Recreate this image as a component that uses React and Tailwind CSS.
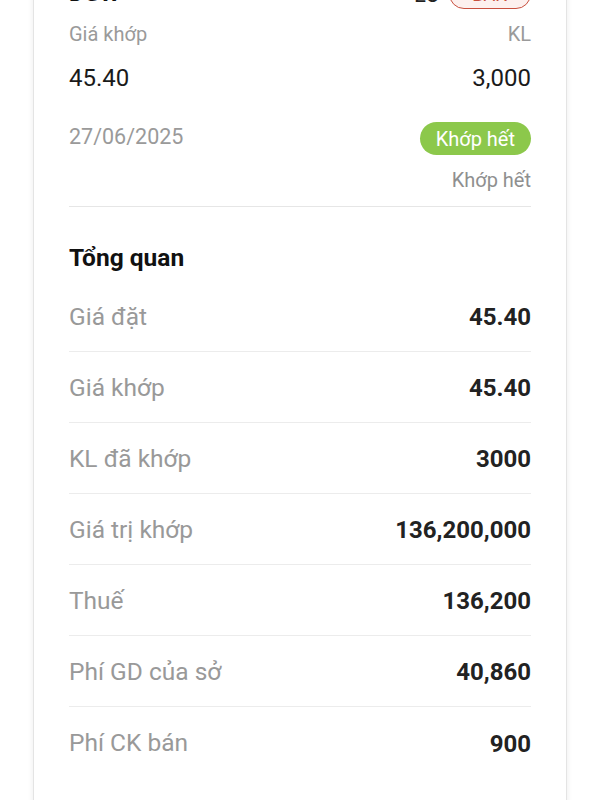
import React from 'react';

const rows = [
  { label: 'Giá đặt', value: '45.40' },
  { label: 'Giá khớp', value: '45.40' },
  { label: 'KL đã khớp', value: '3000' },
  { label: 'Giá trị khớp', value: '136,200,000' },
  { label: 'Thuế', value: '136,200' },
  { label: 'Phí GD của sở', value: '40,860' },
  { label: 'Phí CK bán', value: '900' },
];

const App = () => {
  return (
    <div className="w-[600px] h-[800px] overflow-hidden bg-white font-['Roboto',sans-serif]">
      <div className="mx-[33px] -mt-[22px] min-h-[840px] bg-white border-x border-[#e4e4e4] shadow-[0_0_6px_rgba(0,0,0,0.08)] px-[35px]">
        {/* order head */}
        <div className="h-[32px] mb-[2px] flex items-center justify-between">
          <span className="text-[23px] font-bold text-[#111]">DGW</span>
          <div className="flex items-center gap-[9px]">
            <span className="text-[22px] text-[#222]">LO</span>
            <span className="h-[30px] px-[22px] flex items-center rounded-full border-[1.5px] border-[#c8503f] bg-[#fdf0ee] text-[#c8503f] text-[18px]">BÁN</span>
          </div>
        </div>
        <div className="h-[44px] flex items-center justify-between text-[20px] text-[#9a9a9a]">
          <span>Giá khớp</span>
          <span>KL</span>
        </div>
        <div className="h-[44px] flex items-center justify-between text-[24px] text-[#1a1a1a]">
          <span>45.40</span>
          <span>3,000</span>
        </div>
        <div className="pt-[22px] flex items-center justify-between">
          <span className="text-[21.5px] text-[#9a9a9a] -mt-[2px]">27/06/2025</span>
          <span className="h-[33px] px-[16px] flex items-center rounded-full bg-[#8cc84b] text-white text-[20px]">Khớp hết</span>
        </div>
        <div className="mt-[13px] h-[24px] flex items-center justify-end text-[20px] text-[#8f8f8f]">Khớp hết</div>
        <div className="mt-[14px] border-t border-[#e6e6e6]"></div>

        {/* overview */}
        <div className="mt-[36px] h-[30px] flex items-center text-[24.5px] font-bold text-[#111]">Tổng quan</div>
        <div className="mt-[8px]">
          {rows.map((r, i) => (
            <div
              key={r.label}
              className={`h-[71px] pt-[2px] flex items-center justify-between ${i < rows.length - 1 ? 'border-b border-[#ececec]' : ''}`}
            >
              <span className="text-[24.5px] text-[#999]">{r.label}</span>
              <span className="text-[24px] font-bold text-[#222]">{r.value}</span>
            </div>
          ))}
        </div>
      </div>
    </div>
  );
};

export default App;
